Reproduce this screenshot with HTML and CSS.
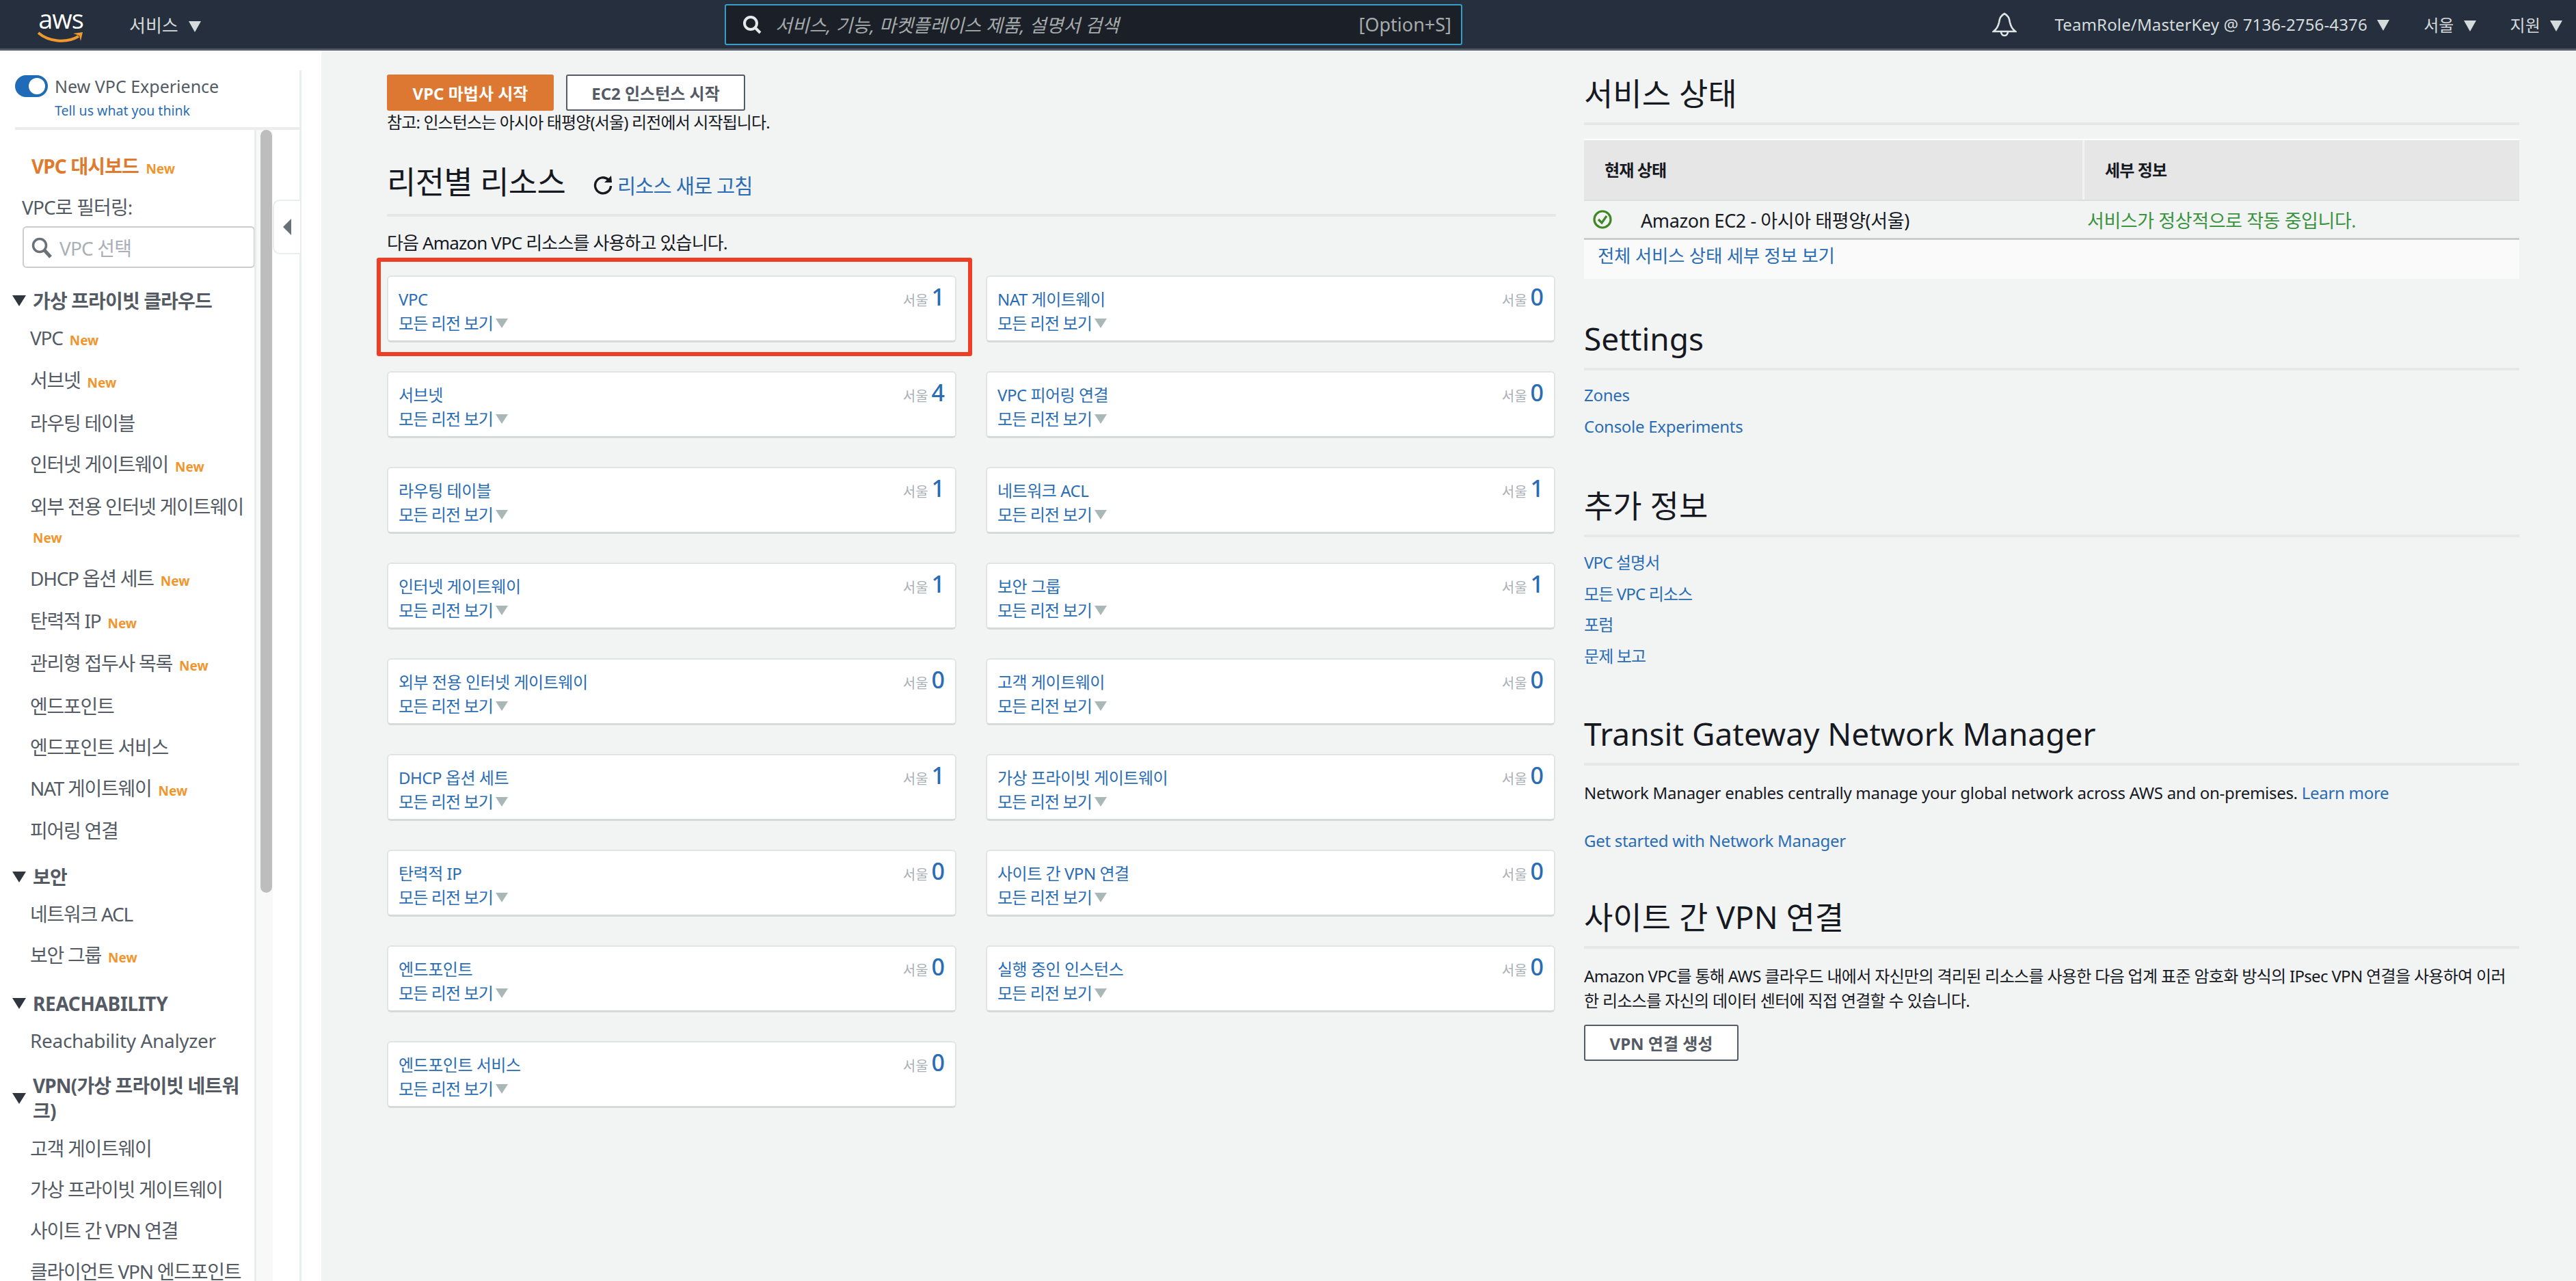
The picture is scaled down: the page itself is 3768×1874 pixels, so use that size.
FILE: index.html
```html
<!DOCTYPE html>
<html lang="ko">
<head>
<meta charset="utf-8">
<title>VPC 대시보드</title>
<link rel="stylesheet" href="styles.css">
</head>
<body>
<header class="topbar">
  <div class="logo">
    <span class="logo-text">aws</span>
    <svg class="smile" viewBox="0 0 68 18" width="68" height="18"><path d="M1 2 C16 15 42 18 60 7" fill="none" stroke="#f09a2e" stroke-width="4"/><path d="M52 3 L66 1 L63 14 L61 6 Z" fill="#f09a2e"/></svg>
  </div>
  <div class="services">서비스 <span class="caret"></span></div>
  <div class="search">
    <svg class="search-icon" viewBox="0 0 28 28" width="28" height="28"><circle cx="12" cy="12" r="9" fill="none" stroke="#e6e9e9" stroke-width="4"/><path d="M18 18 L26 26" stroke="#e6e9e9" stroke-width="4"/></svg>
    <span class="search-ph">서비스, 기능, 마켓플레이스 제품, 설명서 검색</span>
    <span class="search-key">[Option+S]</span>
  </div>
  <div class="top-right">
    <svg class="bell" viewBox="0 0 36 36" width="36" height="36"><path d="M18 2 C12 5 11 9 10 15 C9 20 7 24 2 28 L34 28 C29 24 27 20 26 15 C25 9 24 5 18 2 Z" fill="none" stroke="#e0e4e4" stroke-width="2.6"/><path d="M13 28 C13 36 23 36 23 28" fill="none" stroke="#e0e4e4" stroke-width="2.6"/></svg>
    <span class="account">TeamRole/MasterKey @ 7136-2756-4376 <span class="caret"></span></span>
    <span class="region">서울 <span class="caret"></span></span>
    <span class="support">지원 <span class="caret"></span></span>
  </div>
</header>
<div class="layout">
  <aside class="sidebar">
    <div class="side-panel">
      <div class="experience">
        <div class="exp-row"><span class="toggle"></span><span>New VPC Experience</span></div>
        <a class="exp-link">Tell us what you think</a>
      </div>
      <div class="side-body">
        <nav class="nav">
          <div class="nav-dash">VPC 대시보드 <span class="new">New</span></div>
          <div class="nav-filter">VPC로 필터링:</div>
          <div class="nav-search">
            <svg viewBox="0 0 32 32" width="32" height="32"><circle cx="13" cy="13" r="9.5" fill="none" stroke="#6b7178" stroke-width="3.5"/><path d="M20 20 L29 30" stroke="#6b7178" stroke-width="5"/></svg>
            <span>VPC 선택</span>
          </div>
          <div class="nav-head"><span class="tri"></span>가상 프라이빗 클라우드</div>
          <div class="nav-item has-new">VPC <span class="new">New</span></div>
          <div class="nav-item has-new">서브넷 <span class="new">New</span></div>
          <div class="nav-item">라우팅 테이블</div>
          <div class="nav-item has-new">인터넷 게이트웨이 <span class="new">New</span></div>
          <div class="nav-item has-new">외부 전용 인터넷 게이트웨이 <span class="new">New</span></div>
          <div class="nav-item has-new">DHCP 옵션 세트 <span class="new">New</span></div>
          <div class="nav-item has-new">탄력적 IP <span class="new">New</span></div>
          <div class="nav-item has-new">관리형 접두사 목록 <span class="new">New</span></div>
          <div class="nav-item">엔드포인트</div>
          <div class="nav-item">엔드포인트 서비스</div>
          <div class="nav-item has-new">NAT 게이트웨이 <span class="new">New</span></div>
          <div class="nav-item">피어링 연결</div>
          <div class="nav-head"><span class="tri"></span>보안</div>
          <div class="nav-item">네트워크 ACL</div>
          <div class="nav-item has-new">보안 그룹 <span class="new">New</span></div>
          <div class="nav-head nav-latin"><span class="tri"></span>REACHABILITY</div>
          <div class="nav-item nav-latin">Reachability Analyzer</div>
          <div class="nav-head nav-head-wrap"><span class="tri"></span><span>VPN(가상 프라이빗 네트워크)</span></div>
          <div class="nav-item">고객 게이트웨이</div>
          <div class="nav-item">가상 프라이빗 게이트웨이</div>
          <div class="nav-item">사이트 간 VPN 연결</div>
          <div class="nav-item">클라이언트 VPN 엔드포인트</div>
        </nav>
        <div class="scroll-track"><div class="scroll-thumb"></div></div>
        <div class="collapse-tab"><span class="tri-left"></span></div>
      </div>
    </div>
  </aside>
  <main class="content">
    <section class="resources">
      <div class="actions">
        <button class="btn btn-primary">VPC 마법사 시작</button>
        <button class="btn btn-outline">EC2 인스턴스 시작</button>
      </div>
      <p class="note">참고: 인스턴스는 아시아 태평양(서울) 리전에서 시작됩니다.</p>
      <div class="res-title">
        <h1>리전별 리소스</h1>
        <svg class="refresh" viewBox="0 0 30 30" width="30" height="30"><path d="M23 7 A11.5 11.5 0 1 0 26.5 16" fill="none" stroke="#16191f" stroke-width="3.4"/><path d="M17 11 L28 11 L27 1 Z" fill="#16191f"/></svg>
        <a class="refresh-link">리소스 새로 고침</a>
      </div>
      <p class="res-intro">다음 Amazon VPC 리소스를 사용하고 있습니다.</p>
      <div class="cards">
        <div class="card"><div class="card-top"><a>VPC</a><span class="card-loc">서울</span><b>1</b></div><a class="card-all">모든 리전 보기<span class="tri-grey"></span></a><div class="highlight"></div></div>
        <div class="card"><div class="card-top"><a>NAT 게이트웨이</a><span class="card-loc">서울</span><b>0</b></div><a class="card-all">모든 리전 보기<span class="tri-grey"></span></a></div>
        <div class="card"><div class="card-top"><a>서브넷</a><span class="card-loc">서울</span><b>4</b></div><a class="card-all">모든 리전 보기<span class="tri-grey"></span></a></div>
        <div class="card"><div class="card-top"><a>VPC 피어링 연결</a><span class="card-loc">서울</span><b>0</b></div><a class="card-all">모든 리전 보기<span class="tri-grey"></span></a></div>
        <div class="card"><div class="card-top"><a>라우팅 테이블</a><span class="card-loc">서울</span><b>1</b></div><a class="card-all">모든 리전 보기<span class="tri-grey"></span></a></div>
        <div class="card"><div class="card-top"><a>네트워크 ACL</a><span class="card-loc">서울</span><b>1</b></div><a class="card-all">모든 리전 보기<span class="tri-grey"></span></a></div>
        <div class="card"><div class="card-top"><a>인터넷 게이트웨이</a><span class="card-loc">서울</span><b>1</b></div><a class="card-all">모든 리전 보기<span class="tri-grey"></span></a></div>
        <div class="card"><div class="card-top"><a>보안 그룹</a><span class="card-loc">서울</span><b>1</b></div><a class="card-all">모든 리전 보기<span class="tri-grey"></span></a></div>
        <div class="card"><div class="card-top"><a>외부 전용 인터넷 게이트웨이</a><span class="card-loc">서울</span><b>0</b></div><a class="card-all">모든 리전 보기<span class="tri-grey"></span></a></div>
        <div class="card"><div class="card-top"><a>고객 게이트웨이</a><span class="card-loc">서울</span><b>0</b></div><a class="card-all">모든 리전 보기<span class="tri-grey"></span></a></div>
        <div class="card"><div class="card-top"><a>DHCP 옵션 세트</a><span class="card-loc">서울</span><b>1</b></div><a class="card-all">모든 리전 보기<span class="tri-grey"></span></a></div>
        <div class="card"><div class="card-top"><a>가상 프라이빗 게이트웨이</a><span class="card-loc">서울</span><b>0</b></div><a class="card-all">모든 리전 보기<span class="tri-grey"></span></a></div>
        <div class="card"><div class="card-top"><a>탄력적 IP</a><span class="card-loc">서울</span><b>0</b></div><a class="card-all">모든 리전 보기<span class="tri-grey"></span></a></div>
        <div class="card"><div class="card-top"><a>사이트 간 VPN 연결</a><span class="card-loc">서울</span><b>0</b></div><a class="card-all">모든 리전 보기<span class="tri-grey"></span></a></div>
        <div class="card"><div class="card-top"><a>엔드포인트</a><span class="card-loc">서울</span><b>0</b></div><a class="card-all">모든 리전 보기<span class="tri-grey"></span></a></div>
        <div class="card"><div class="card-top"><a>실행 중인 인스턴스</a><span class="card-loc">서울</span><b>0</b></div><a class="card-all">모든 리전 보기<span class="tri-grey"></span></a></div>
        <div class="card"><div class="card-top"><a>엔드포인트 서비스</a><span class="card-loc">서울</span><b>0</b></div><a class="card-all">모든 리전 보기<span class="tri-grey"></span></a></div>
      </div>
    </section>
    <section class="aside-col">
      <h2 class="sec-title sec-status">서비스 상태</h2>
      <div class="status-table">
        <div class="st-head"><div class="st-h1">현재 상태</div><div class="st-h2">세부 정보</div></div>
        <div class="st-row">
          <div class="st-c1">
            <svg viewBox="0 0 30 30" width="30" height="30"><circle cx="15" cy="15" r="12" fill="none" stroke="#3f8624" stroke-width="3.2"/><path d="M9 15 L14 20 L21 10" fill="none" stroke="#3f8624" stroke-width="3.2"/></svg>
            <span>Amazon EC2 - 아시아 태평양(서울)</span>
          </div>
          <div class="st-c2">서비스가 정상적으로 작동 중입니다.</div>
        </div>
        <div class="st-foot"><a>전체 서비스 상태 세부 정보 보기</a></div>
      </div>
      <h2 class="sec-title sec-settings">Settings</h2>
      <ul class="links links-latin">
        <li><a>Zones</a></li>
        <li><a>Console Experiments</a></li>
      </ul>
      <h2 class="sec-title sec-more">추가 정보</h2>
      <ul class="links links-more">
        <li><a>VPC 설명서</a></li>
        <li><a>모든 VPC 리소스</a></li>
        <li><a>포럼</a></li>
        <li><a>문제 보고</a></li>
      </ul>
      <h2 class="sec-title sec-tgw">Transit Gateway Network Manager</h2>
      <p class="para para-latin">Network Manager enables centrally manage your global network across AWS and on-premises. <a>Learn more</a></p>
      <p class="para para-latin para-gs"><a>Get started with Network Manager</a></p>
      <h2 class="sec-title sec-vpn">사이트 간 VPN 연결</h2>
      <p class="para para-vpn">Amazon VPC를 통해 AWS 클라우드 내에서 자신만의 격리된 리소스를 사용한 다음 업계 표준 암호화 방식의 IPsec VPN 연결을 사용하여 이러한 리소스를 자신의 데이터 센터에 직접 연결할 수 있습니다.</p>
      <button class="btn btn-outline btn-vpn">VPN 연결 생성</button>
    </section>
  </main>
</div>
</body>
</html>
```
FILE: styles.css
```css
* { box-sizing: border-box; }
html, body { margin: 0; padding: 0; height: 100%; overflow: hidden; }
body {
  font-family: "Noto Sans", "Noto Sans CJK KR", sans-serif;
  font-size: 24px;
  color: #16191f;
  background: #f2f3f3;
  letter-spacing: -0.036em;
}
a { color: #2a6db5; }
.caret {
  display: inline-block;
  width: 0; height: 0;
  border-left: 9px solid transparent;
  border-right: 9px solid transparent;
  border-top: 16px solid #d5dbdb;
  margin-left: 8px;
}
.topbar {
  height: 74px;
  background: #252f3e;
  border-bottom: 3px solid #545b64;
  display: flex;
  align-items: center;
  color: #d5dbdb;
  font-size: 24px;
  letter-spacing: 0;
}
.logo { width: 68px; margin-left: 55px; padding-top: 4px; display: flex; flex-direction: column; align-items: center; color: #fff; }
.logo-text { font-family: "Open Sans", sans-serif; font-size: 38px; line-height: 30px; height: 34px; letter-spacing: -1px; }
.smile { display: block; }
.services { margin-left: 66px; width: 871px; white-space: nowrap; font-size: 26px; }
.search {
  width: 1079px;
  height: 60px;
  background: #1b1f27;
  border: 2px solid #3a9dc9;
  border-radius: 3px;
  display: flex;
  align-items: center;
  padding: 0 14px 0 24px;
  font-size: 27px;
}
.search-icon { flex: none; }
.search-ph { margin-left: 20px; font-style: italic; color: #a5abab; flex: 1; }
.search-key { color: #a5abab; }
.top-right { flex: 1; display: flex; align-items: center; justify-content: flex-end; padding-right: 20px; }
.bell { margin-right: 55px; }
.account { margin-right: 50px; letter-spacing: 0.14px; }
.region { margin-right: 50px; }
.layout { display: flex; height: 1800px; }
.sidebar { width: 470px; background: #fff; padding-top: 29px; flex: none; }
.side-panel { width: 441px; height: 100%; border-right: 3px solid #eaeded; display: flex; flex-direction: column; }
.experience { height: 87px; margin-left: 22px; border-bottom: 4px solid #eaeded; color: #545b64; flex: none; letter-spacing: 0; }
.exp-row { display: flex; align-items: center; gap: 10px; font-size: 25px; height: 46px; }
.toggle { width: 48px; height: 32px; border-radius: 16px; background: #1f6bb8; position: relative; flex: none; }
.toggle::after { content: ""; position: absolute; right: 4px; top: 4px; width: 24px; height: 24px; border-radius: 50%; background: #fff; }
.exp-link { display: block; font-size: 19.5px; line-height: 26px; margin-left: 58px; color: #2a6db5; }
.side-body { flex: 1; display: flex; position: relative; min-height: 0; }
.nav { width: 375px; border-right: 3px solid #eaeded; overflow: hidden; color: #545b64; font-size: 28px; flex: none; }
.new { color: #f0962e; font-size: 19px; font-weight: 700; margin-left: 4px; line-height: 1; letter-spacing: 0; }
.nav-dash { color: #df7a2e; font-weight: 700; margin: 33px 0 0 46px; line-height: 40px; }
.nav-filter { margin: 20px 0 0 32px; line-height: 40px; }
.nav-search { margin: 8px 0 28px 33px; width: 340px; height: 61px; border: 2px solid #ccc; border-radius: 6px; display: flex; align-items: center; padding-left: 10px; gap: 10px; color: #aab0b7; }
.nav-head { display: flex; align-items: center; font-weight: 700; line-height: 40px; margin: 18px 0 4px 18px; }
.nav-head-wrap { line-height: 37px; margin-bottom: 6px; }
.nav-latin { letter-spacing: -0.012em; }
.tri { flex: none; width: 0; height: 0; border-left: 10px solid transparent; border-right: 10px solid transparent; border-top: 16px solid #30363e; margin-right: 10px; }
.nav-item { margin-left: 44px; padding: 9px 0; line-height: 42px; letter-spacing: -0.045em; }
.nav-item.nav-latin { letter-spacing: -0.012em; }
.has-new { padding-bottom: 11.4px; }
.scroll-track { width: 24px; background: #f8f8f8; flex: none; padding-left: 6px; }
.scroll-thumb { width: 17px; height: 1116px; background: #bdbdbd; border-radius: 9px; }
.collapse-tab { position: absolute; left: 399px; top: 102px; width: 40px; height: 80px; background: #fff; border: 2px solid #eaeded; border-right: 0; border-radius: 10px 0 0 10px; display: flex; align-items: center; justify-content: center; }
.tri-left { width: 0; height: 0; border-top: 12px solid transparent; border-bottom: 12px solid transparent; border-right: 12px solid #687078; }
.content { flex: 1; display: flex; padding-left: 96px; gap: 41px; min-width: 0; }
.resources { width: 1710px; flex: none; padding-top: 35px; }
.actions { display: flex; gap: 18px; }
.btn { font-family: inherit; font-size: 24px; font-weight: 700; height: 53px; border-radius: 3px; cursor: pointer; letter-spacing: 0; }
.btn-primary { width: 244px; background: #dd7832; color: #fff; border: 0; }
.btn-outline { width: 262px; background: #fff; color: #545b64; border: 2px solid #545b64; }
.note { margin: 0; line-height: 34px; }
.res-title { display: flex; align-items: center; margin-top: 30px; padding-bottom: 14px; border-bottom: 4px solid #e6e8e8; height: 91px; }
.res-title h1 { margin: 0; font-size: 46px; font-weight: 400; width: 301px; letter-spacing: -0.015em; }
.refresh { margin: 16px 6px 0 0; }
.refresh-link { font-size: 29.5px; margin-top: 16px; }
.res-intro { margin: 21px 0 0; line-height: 34px; font-size: 26px; }
.cards { margin-top: 31px; display: grid; grid-template-columns: 833px 833px; column-gap: 43px; row-gap: 42px; }
.card { position: relative; height: 98px; background: #fff; border: 2px solid #e2e4e4; border-bottom: 3px solid #d5d9d9; border-radius: 6px; padding: 14px 15px 0; }
.card-top { display: flex; align-items: baseline; line-height: 33px; }
.card-top a { flex: 1; letter-spacing: -0.02em; }
.card-loc { color: #aab0b7; font-size: 20px; margin-right: 5px; letter-spacing: 0; }
.card-top b { color: #2a6db5; font-weight: 500; font-size: 34px; line-height: 30px; min-width: 19px; text-align: center; letter-spacing: 0; }
.card-all { display: flex; align-items: center; line-height: 33px; }
.tri-grey { width: 0; height: 0; margin-left: 4px; border-left: 9px solid transparent; border-right: 9px solid transparent; border-top: 14px solid #aab7b8; }
.highlight { position: absolute; left: -17px; right: -25px; top: -28px; bottom: -23px; border: 6px solid #ee3f26; border-radius: 3px; pointer-events: none; }
.aside-col { width: 1368px; flex: none; }
.sec-title { margin: 0; font-weight: 400; font-size: 46px; border-bottom: 4px solid #e6e8e8; line-height: 62px; padding-bottom: 12px; letter-spacing: 0; }
.sec-status { margin-top: 31px; }
.status-table { margin-top: 20px; }
.st-head { display: flex; height: 91px; background: #e6e6e6; border-top: 2px solid #fff; border-bottom: 2px solid #ddd; font-weight: 700; line-height: 87px; }
.st-h1 { width: 732px; padding-left: 30px; border-right: 3px solid #f2f3f3; }
.st-h2 { padding-left: 30px; }
.st-row { display: flex; height: 57px; border-bottom: 3px solid #ccc; align-items: center; font-size: 27px; letter-spacing: -0.015em; }
.st-c1 { width: 732px; display: flex; align-items: center; padding-left: 12px; gap: 41px; }
.st-c2 { color: #3a9340; padding-left: 4px; }
.st-foot { height: 57px; background: #fafafa; padding: 2px 20px; font-size: 26.5px; letter-spacing: -0.01em; }
.sec-settings { margin-top: 56px; }
.links { list-style: none; margin: 13px 0 0; padding: 0; }
.links-more { margin-top: 14px; }
.links li { line-height: 45.5px; }
.links-latin { letter-spacing: -0.012em; }
.sec-more { margin-top: 62px; }
.sec-tgw { margin-top: 60px; }
.para { margin: 22px 0 0; line-height: 36px; }
.para-latin { letter-spacing: -0.012em; }
.para-gs { margin-top: 34px; }
.sec-vpn { margin-top: 62px; }
.para-vpn { margin-top: 22px; letter-spacing: -0.028em; }
.btn-vpn { display: block; width: 226px; margin-top: 17px; }
```
